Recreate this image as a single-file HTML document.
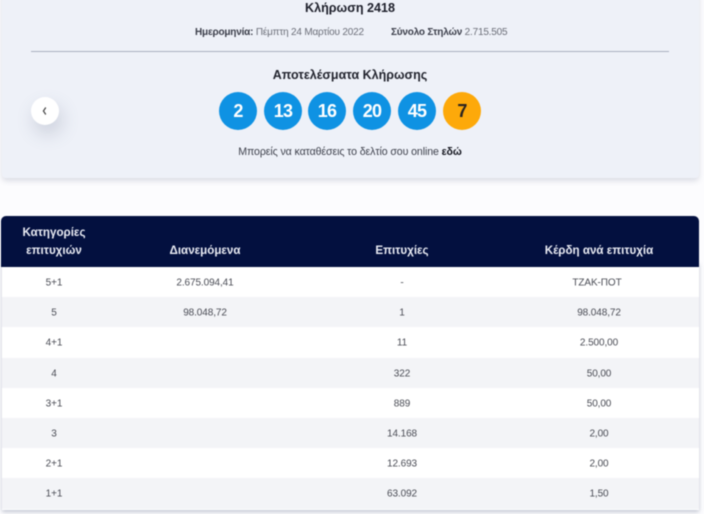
<!DOCTYPE html>
<html><head><meta charset="utf-8"><style>
html,body{margin:0;padding:0}
body{width:704px;height:514px;overflow:hidden;background:#fcfcfe;position:relative;font-family:"Liberation Sans",sans-serif;color:#3a3d48}
#w{position:absolute;inset:0;filter:blur(.45px)}
.a{position:absolute;white-space:nowrap}
.c{transform:translateX(-50%)}
.b{position:absolute;top:92px;width:38px;height:38px;border-radius:50%;background:#0f92e3;color:#fff;font:bold 18px/38px "Liberation Sans",sans-serif;letter-spacing:-.7px;text-align:center}
.r{position:absolute;left:2px;width:697px;height:30.2px;background:#fff}
.r.g{background:#f3f4f7}
.t{position:absolute;transform:translate(-50%,-50%);font-size:10px;color:#4a4c55;white-space:nowrap;letter-spacing:-.1px}
.h{position:absolute;transform:translate(-50%,-50%);font:bold 11.6px/18px "Liberation Sans",sans-serif;color:#e9ebf3;white-space:nowrap;text-align:center}
</style></head><body><div id="w">
<div class="a" style="left:2px;top:-10px;width:697px;height:188px;background:#eef1f8;border-radius:4px;box-shadow:0 3px 6px rgba(90,100,130,.2)"></div>
<div class="a c" style="left:350px;top:1px;font:bold 12.6px/15px 'Liberation Sans',sans-serif;color:#1d1f2a">Κλήρωση 2418</div>
<div class="a" style="left:195px;top:26px;font-size:10px;line-height:13px;color:#6b6e78;letter-spacing:-.2px"><b style="color:#3b3e4a">Ημερομηνία:</b> Πέμπτη 24 Μαρτίου 2022</div>
<div class="a" style="left:391px;top:26px;font-size:10px;line-height:13px;color:#6b6e78;letter-spacing:-.2px"><b style="color:#3b3e4a">Σύνολο Στηλών</b> 2.715.505</div>
<div class="a" style="left:31px;top:51px;width:638px;height:1px;background:#a9b0c0"></div>
<div class="a c" style="left:350px;top:68px;font:bold 12.5px/15px 'Liberation Sans',sans-serif;color:#22242e">Αποτελέσματα Κλήρωσης</div>
<div class="a" style="left:31px;top:97px;width:28px;height:28px;border-radius:50%;background:#fff;box-shadow:3px 9px 18px rgba(90,100,130,.24)"></div>
<svg class="a" style="left:41px;top:106px" width="7" height="10" viewBox="0 0 7 10"><path d="M4.8 1.5 L2.4 5 L4.8 8.5" fill="none" stroke="#444" stroke-width="1.2"/></svg>
<div class="b" style="left:219px">2</div>
<div class="b" style="left:264px">13</div>
<div class="b" style="left:308px">16</div>
<div class="b" style="left:353px">20</div>
<div class="b" style="left:398px">45</div>
<div class="b" style="left:443px;background:#fda90a;color:#2a2420">7</div>
<div class="a c" style="left:350px;top:146px;font-size:10.6px;line-height:13px;color:#3f424d;letter-spacing:-.1px">Μπορείς να καταθέσεις το δελτίο σου online <b style="color:#14161f">εδώ</b></div>

<div class="a" style="left:2px;top:262px;width:697px;height:248px;box-shadow:0 2px 4px rgba(90,100,130,.35)"></div>
<div class="a" style="left:1px;top:216px;width:698px;height:51px;background:#03103f;border-radius:5px 5px 0 0"></div>
<div class="h" style="left:54px;top:242px">Κατηγορίες<br>επιτυχιών</div>
<div class="h" style="left:205px;top:251px">Διανεμόμενα</div>
<div class="h" style="left:402px;top:251px">Επιτυχίες</div>
<div class="h" style="left:599px;top:251px">Κέρδη ανά επιτυχία</div>

<div class="r" style="top:267px"></div>
<div class="r g" style="top:297.2px"></div>
<div class="r" style="top:327.4px"></div>
<div class="r g" style="top:357.6px"></div>
<div class="r" style="top:387.8px"></div>
<div class="r g" style="top:418px"></div>
<div class="r" style="top:448.2px"></div>
<div class="r g" style="top:478.4px"></div>

<div class="t" style="left:54px;top:283px">5+1</div><div class="t" style="left:205px;top:283px">2.675.094,41</div><div class="t" style="left:402px;top:283px">-</div><div class="t" style="left:597px;top:283px">ΤΖΑΚ-ΠΟΤ</div>
<div class="t" style="left:54px;top:313px">5</div><div class="t" style="left:205px;top:313px">98.048,72</div><div class="t" style="left:402px;top:313px">1</div><div class="t" style="left:599px;top:313px">98.048,72</div>
<div class="t" style="left:54px;top:343px">4+1</div><div class="t" style="left:402px;top:343px">11</div><div class="t" style="left:599px;top:343px">2.500,00</div>
<div class="t" style="left:54px;top:373.5px">4</div><div class="t" style="left:402px;top:373.5px">322</div><div class="t" style="left:599px;top:373.5px">50,00</div>
<div class="t" style="left:54px;top:404px">3+1</div><div class="t" style="left:402px;top:404px">889</div><div class="t" style="left:599px;top:404px">50,00</div>
<div class="t" style="left:54px;top:434px">3</div><div class="t" style="left:402px;top:434px">14.168</div><div class="t" style="left:599px;top:434px">2,00</div>
<div class="t" style="left:54px;top:464px">2+1</div><div class="t" style="left:402px;top:464px">12.693</div><div class="t" style="left:599px;top:464px">2,00</div>
<div class="t" style="left:54px;top:494px">1+1</div><div class="t" style="left:402px;top:494px">63.092</div><div class="t" style="left:599px;top:494px">1,50</div>
</div></body></html>
